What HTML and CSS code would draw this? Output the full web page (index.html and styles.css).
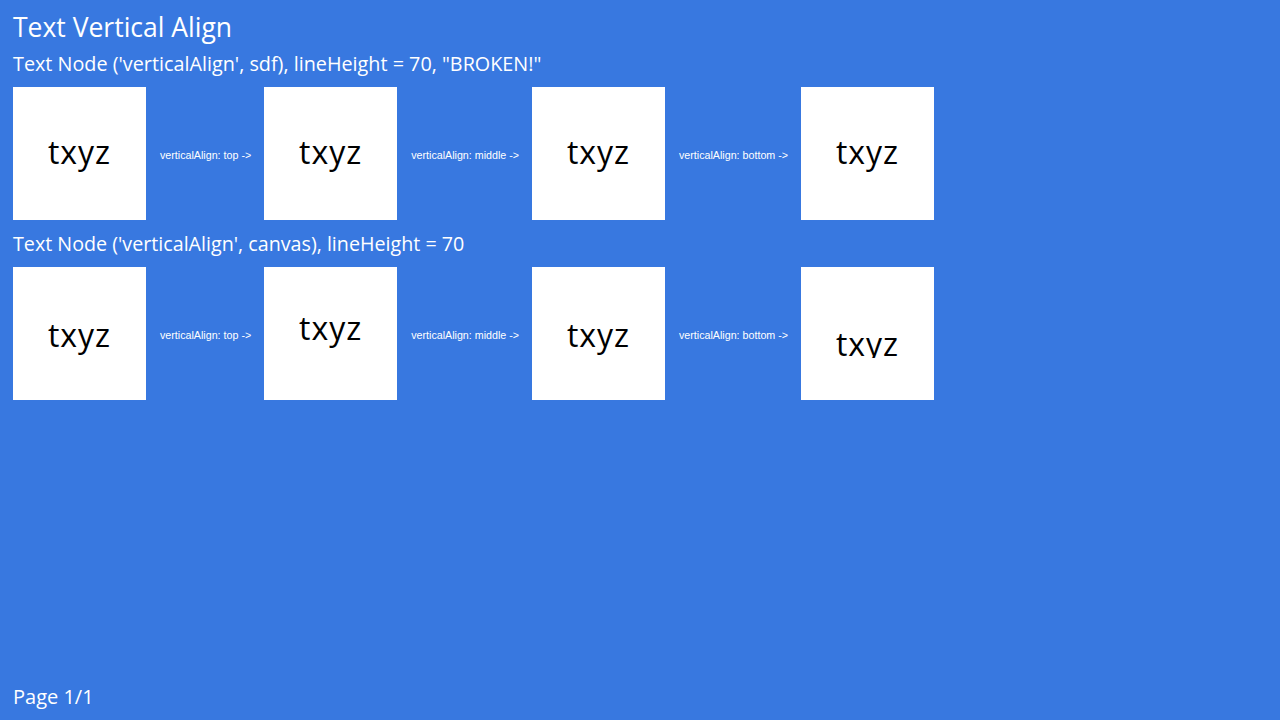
FILE: index.html
```html
<!DOCTYPE html>
<html>
<head>
<meta charset="utf-8">
<link rel="stylesheet" href="styles.css">
</head>
<body>
<div class="page">
  <h1 class="title">Text Vertical Align</h1>
  <div class="subtitle">Text Node ('verticalAlign', sdf), lineHeight = 70, "BROKEN!"</div>
  <div class="row">
    <div class="box pad-49"><div class="glyph">txyz</div></div>
    <div class="label">verticalAlign: top -&gt;</div>
    <div class="box pad-49"><div class="glyph">txyz</div></div>
    <div class="label">verticalAlign: middle -&gt;</div>
    <div class="box pad-49"><div class="glyph">txyz</div></div>
    <div class="label">verticalAlign: bottom -&gt;</div>
    <div class="box pad-49"><div class="glyph">txyz</div></div>
  </div>
  <div class="subtitle second">Text Node ('verticalAlign', canvas), lineHeight = 70</div>
  <div class="row">
    <div class="box pad-52"><div class="glyph">txyz</div></div>
    <div class="label">verticalAlign: top -&gt;</div>
    <div class="box pad-45"><div class="glyph">txyz</div></div>
    <div class="label">verticalAlign: middle -&gt;</div>
    <div class="box pad-52"><div class="glyph">txyz</div></div>
    <div class="label">verticalAlign: bottom -&gt;</div>
    <div class="box pad-61"><div class="glyph clipped">txyz</div></div>
  </div>
  <div class="footer">Page 1/1</div>
</div>
</body>
</html>
```

FILE: styles.css
```css
html, body {
  margin: 0;
  padding: 0;
  background: #3878e0;
}
.page {
  box-sizing: border-box;
  height: 720px;
  display: flex;
  flex-direction: column;
  align-items: flex-start;
  padding: 9px 13px 9px 13px;
  color: #ffffff;
  font-family: "Open Sans", "Noto Sans", sans-serif;
}
.title {
  margin: 0;
  font-size: 26.5px;
  font-weight: 400;
  line-height: 36px;
}
.subtitle {
  margin-top: 5px;
  font-size: 19.8px;
  line-height: 28px;
}
.subtitle.second {
  margin-top: 10px;
  font-size: 19.7px;
}
.row {
  margin-top: 9px;
  display: flex;
  align-items: center;
}
.box {
  box-sizing: border-box;
  width: 133px;
  height: 133px;
  background: #ffffff;
  overflow: hidden;
  color: #000000;
  text-align: center;
}
.glyph {
  font-family: "Open Sans", "Noto Sans", sans-serif;
  font-size: 32px;
  line-height: 32px;
  letter-spacing: 1px;
}
.glyph.clipped {
  height: 30px;
  overflow: hidden;
}
.pad-49 { padding-top: 49px; }
.pad-52 { padding-top: 52px; }
.pad-45 { padding-top: 45px; }
.pad-61 { padding-top: 61px; }
.label {
  font-family: "Liberation Sans", Arial, sans-serif;
  font-size: 10.7px;
  line-height: 12px;
  padding: 2px 13px 0 14px;
  white-space: nowrap;
}
.footer {
  margin-top: auto;
  font-size: 20px;
  line-height: 28px;
}
```
